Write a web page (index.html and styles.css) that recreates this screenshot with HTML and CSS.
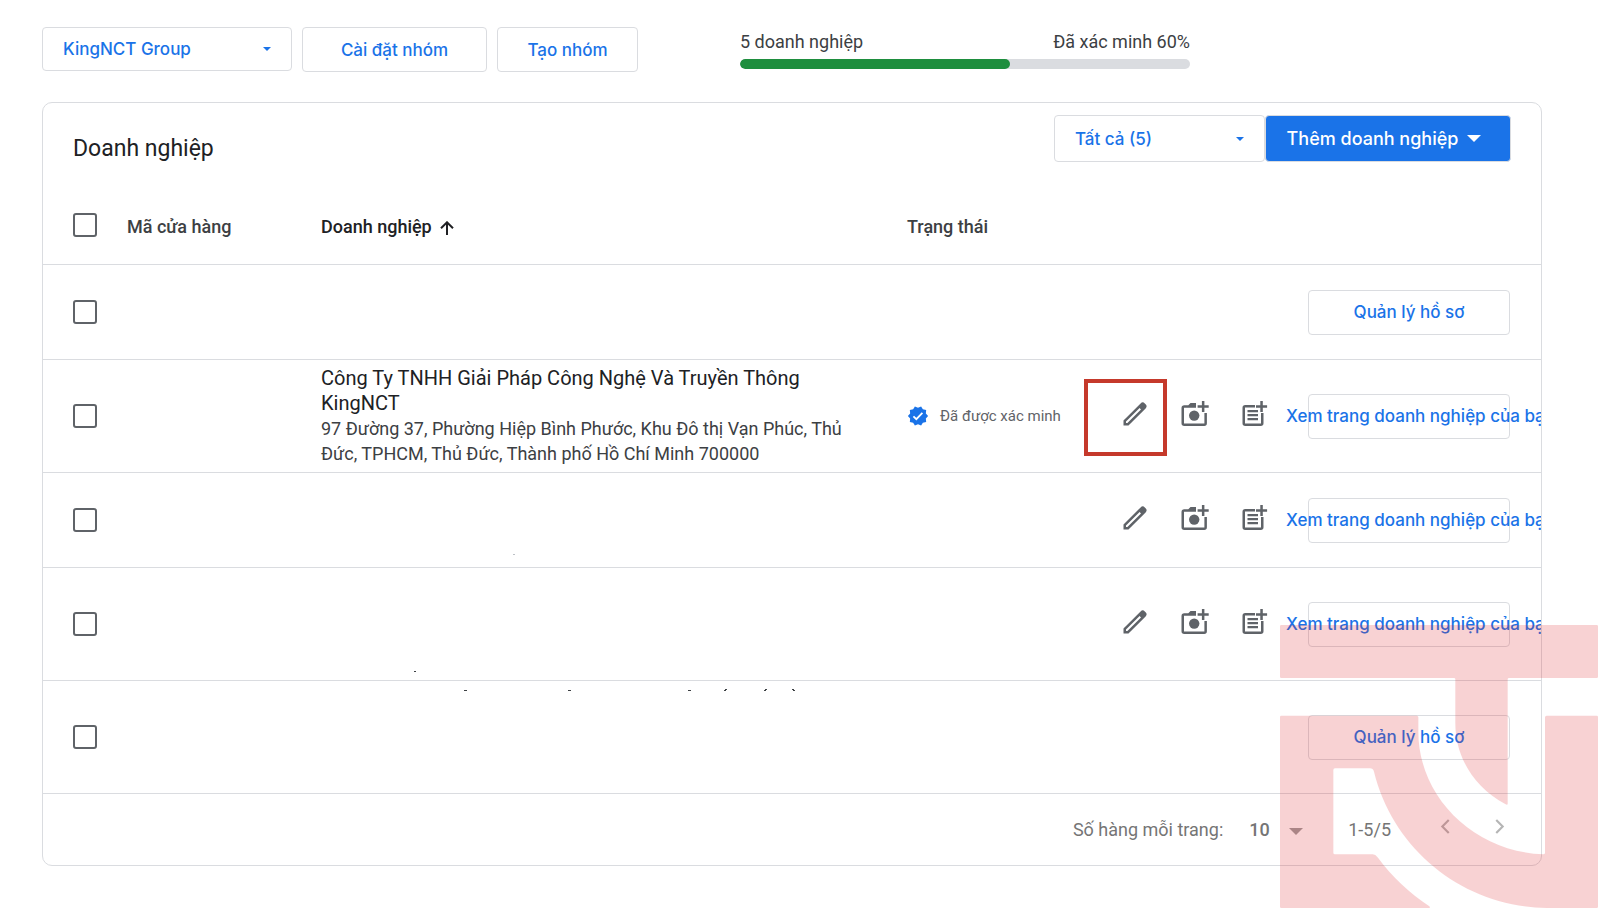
FILE: index.html
```html
<!DOCTYPE html>
<html lang="vi">
<head>
    <meta charset="UTF-8">
    <meta name="viewport" content="width=device-width, initial-scale=1.0">
    <title>Doanh nghiệp</title>
    <link rel="stylesheet" href="styles.css">
</head>
<body>
    <!-- Shared icons -->
    <svg class="sprite" aria-hidden="true">
        <symbol id="icon-edit" viewBox="0 0 24 24">
            <path fill-rule="evenodd" d="M0.5 18.5 17.6 1.4a3 3 0 0 1 4.2 0l0.8 0.8a3 3 0 0 1 0 4.2L5.5 23.5H0.5ZM3 19.6V21h1.4L18 7.4 16.6 6Z"/>
        </symbol>
        <symbol id="icon-photo" viewBox="0 0 28 26">
            <path d="M15 2H9.5L7.3 4.3H3.2A2.7 2.7 0 0 0 .5 7v15.3A2.7 2.7 0 0 0 3.2 25h20a2.7 2.7 0 0 0 2.7-2.7V12h-2.5v10.5H3V6.8h12Z"/>
            <circle cx="13.2" cy="14.6" r="5.2"/>
            <path d="M20.9 0h2.5v4.3h4.3v2.5h-4.3v4.3h-2.5V6.8h-4.3V4.3h4.3Z"/>
        </symbol>
        <symbol id="icon-post" viewBox="0 0 26 26">
            <path d="M13 4H3.2A2.7 2.7 0 0 0 .5 6.7v15.6A2.7 2.7 0 0 0 3.2 25h15.600a2.7 2.7 0 0 0 2.7-2.7V12H19v10.500H3v-16h10Z"/>
            <path d="M5.500 9H16v2.300H5.500ZM5.500 13H16v2.300H5.500ZM5.500 17H16v2.300H5.500Z"/>
            <path d="M18.3 0h2.500v4.300h4.300v2.500h-4.300v4.300h-2.500V6.800H14V4.300h4.300Z"/>
        </symbol>
        <symbol id="icon-arrow" viewBox="0 0 10 5">
            <path d="M0 0h10L5 5Z"/>
        </symbol>
    </svg>

    <header class="toolbar">
        <div class="select-box group-select">
            <select aria-label="Nhóm">
                <option>KingNCT Group</option>
            </select>
            <svg class="small-arrow"><use href="#icon-arrow"/></svg>
        </div>
        <button type="button" class="btn btn-settings">Cài đặt nhóm</button>
        <button type="button" class="btn btn-create">Tạo nhóm</button>
        <div class="progress">
            <div class="progress-text">
                <span>5 doanh nghiệp</span>
                <span>Đã xác minh 60%</span>
            </div>
            <div class="progress-track">
                <div class="progress-fill" style="width: 60%"></div>
            </div>
        </div>
    </header>

    <main class="card">
        <div class="card-head">
            <h1>Doanh nghiệp</h1>
            <div class="select-box filter-select">
                <select aria-label="Lọc">
                    <option>Tất cả (5)</option>
                </select>
                <svg class="small-arrow"><use href="#icon-arrow"/></svg>
            </div>
            <button type="button" class="btn btn-primary">Thêm doanh nghiệp
                <svg class="big-arrow"><use href="#icon-arrow"/></svg>
            </button>
        </div>

        <table>
            <colgroup>
                <col class="col-check">
                <col class="col-code">
                <col>
                <col class="col-status">
                <col class="col-actions">
            </colgroup>
            <thead>
                <tr>
                    <th class="check"><input type="checkbox" aria-label="Chọn tất cả"></th>
                    <th>Mã cửa hàng</th>
                    <th class="sorted">Doanh nghiệp
                        <svg class="sort-icon" viewBox="0 0 14 14"><path d="M7 14V1.5M1 7.3l6-6 6 6"/></svg>
                    </th>
                    <th>Trạng thái</th>
                    <th></th>
                </tr>
            </thead>
            <tbody>
                <tr>
                    <td class="check"><input type="checkbox" aria-label="Chọn hàng 1"></td>
                    <td></td>
                    <td></td>
                    <td></td>
                    <td>
                        <div class="actions">
                            <button type="button" class="btn btn-row">Quản lý hồ sơ</button>
                        </div>
                    </td>
                </tr>
                <tr class="tall">
                    <td class="check"><input type="checkbox" aria-label="Chọn hàng 2"></td>
                    <td></td>
                    <td class="business">
                        <div class="name">Công Ty TNHH Giải Pháp Công Nghệ Và Truyền Thông KingNCT</div>
                        <div class="address">97 Đường 37, Phường Hiệp Bình Phước, Khu Đô thị Vạn Phúc, Thủ Đức, TPHCM, Thủ Đức, Thành phố Hồ Chí Minh 700000</div>
                    </td>
                    <td>
                        <div class="status">
                            <svg viewBox="0 0 24 24"><path d="M23 12l-2.44-2.78.34-3.68-3.61-.82-1.89-3.18L12 3 8.600 1.540 6.710 4.720l-3.610.810.340 3.680L1 12l2.440 2.780-.340 3.690 3.610.820 1.890 3.180L12 21l3.400 1.460 1.890-3.180 3.610-.820-.340-3.680L23 12z"/><path class="tick" d="M7 12.300l3.200 3.200 6.600-6.800"/></svg>
                            <span>Đã được xác minh</span>
                        </div>
                    </td>
                    <td>
                        <div class="actions">
                            <button type="button" class="icon-btn marked" aria-label="Chỉnh sửa"><svg class="edit"><use href="#icon-edit"/></svg></button>
                            <button type="button" class="icon-btn" aria-label="Thêm ảnh"><svg class="photo"><use href="#icon-photo"/></svg></button>
                            <button type="button" class="icon-btn" aria-label="Thêm bài đăng"><svg class="post"><use href="#icon-post"/></svg></button>
                            <button type="button" class="btn btn-row btn-view"><span>Xem trang doanh nghiệp của bạn</span></button>
                        </div>
                    </td>
                </tr>
                <tr>
                    <td class="check"><input type="checkbox" aria-label="Chọn hàng 3"></td>
                    <td></td>
                    <td class="traces"><svg viewBox="0 0 480 94"><path class="faint" d="M192 81h2v1h-2z"/></svg></td>
                    <td></td>
                    <td>
                        <div class="actions">
                            <button type="button" class="icon-btn" aria-label="Chỉnh sửa"><svg class="edit"><use href="#icon-edit"/></svg></button>
                            <button type="button" class="icon-btn" aria-label="Thêm ảnh"><svg class="photo"><use href="#icon-photo"/></svg></button>
                            <button type="button" class="icon-btn" aria-label="Thêm bài đăng"><svg class="post"><use href="#icon-post"/></svg></button>
                            <button type="button" class="btn btn-row btn-view"><span>Xem trang doanh nghiệp của bạn</span></button>
                        </div>
                    </td>
                </tr>
                <tr class="tall">
                    <td class="check"><input type="checkbox" aria-label="Chọn hàng 4"></td>
                    <td></td>
                    <td class="traces"><svg viewBox="0 0 480 112"><path d="M93 103h2v1h-2z"/></svg></td>
                    <td></td>
                    <td>
                        <div class="actions">
                            <button type="button" class="icon-btn" aria-label="Chỉnh sửa"><svg class="edit"><use href="#icon-edit"/></svg></button>
                            <button type="button" class="icon-btn" aria-label="Thêm ảnh"><svg class="photo"><use href="#icon-photo"/></svg></button>
                            <button type="button" class="icon-btn" aria-label="Thêm bài đăng"><svg class="post"><use href="#icon-post"/></svg></button>
                            <button type="button" class="btn btn-row btn-view"><span>Xem trang doanh nghiệp của bạn</span></button>
                        </div>
                    </td>
                </tr>
                <tr class="tall">
                    <td class="check"><input type="checkbox" aria-label="Chọn hàng 5"></td>
                    <td></td>
                    <td class="traces"><svg viewBox="0 0 480 112"><path d="M143 9h3v1h-3zM247 9h3v1h-3zM367 9h3v1h-3zM403 9h2v1h-2zM404 8h2v1h-2zM443 9h2v1h-2zM444 8h2v1h-2zM471 8h2v1h-2zM472 9h2v1h-2z"/></svg></td>
                    <td></td>
                    <td>
                        <div class="actions">
                            <button type="button" class="btn btn-row">Quản lý hồ sơ</button>
                        </div>
                    </td>
                </tr>
            </tbody>
        </table>

        <footer class="pager">
            <label for="rows">Số hàng mỗi trang:</label>
            <div class="select-box rows-select">
                <select id="rows">
                    <option>10</option>
                </select>
                <svg class="big-arrow"><use href="#icon-arrow"/></svg>
            </div>
            <span class="range">1-5/5</span>
            <button type="button" class="page-btn" aria-label="Trang trước"><svg viewBox="0 0 9 14"><path d="M8 1 2 7l6 6"/></svg></button>
            <button type="button" class="page-btn" aria-label="Trang sau"><svg viewBox="0 0 9 14"><path d="m1 1 6 6-6 6"/></svg></button>
        </footer>
    </main>

    <!-- Logo watermark over the bottom corner -->
    <svg class="watermark" viewBox="60 105 954 849" aria-hidden="true">
        <path d="M64 105H1010q4 0 4 4V260q0 4-4 4H747q-4 0-4 4V641q0 5-6 2C640 590 586 500 586 400V268q0-4-4-4H64q-4 0-4-4V109q0-4 4-4Z"/>
        <path d="M64 377H470q5 0 5 5V425C475 620 640 785 850 793q5 0 5-5V382q0-5 5-5H1010q4 0 4 4V950q0 4-4 4H860C610 950 400 780 342 545Q339 535 330 535H225q-5 0-5 5V788q0 5 5 5H338Q346 793 354 803C395 860 450 910 508 949q4 5-2 5H64q-4 0-4-4V381q0-4 4-4Z"/>
    </svg>
</body>
</html>
```
FILE: styles.css
```css
*,
*::after {
    box-sizing: border-box;
}

body {
    margin: 0;
    padding: 27px 57px 41px 42px;
    background-color: #fff;
    color: #3c4043;
    font-family: Roboto, "Noto Sans", sans-serif;
    font-size: 18px;
    line-height: 25px;
}

button,
select {
    font-family: Inter, "Noto Sans", sans-serif;
    font-size: 17px;
    font-weight: 500;
    color: #1a73e8;
}

.sprite {
    display: none;
}

/* Top bar */
.toolbar {
    display: flex;
    align-items: flex-start;
    gap: 10px;
    margin-bottom: 30px;
}

.btn {
    height: 45px;
    padding: 0;
    background-color: #fff;
    border: 1px solid #dadce0;
    border-radius: 4px;
    white-space: nowrap;
    cursor: pointer;
}

.btn-settings {
    width: 185px;
}

.btn-create {
    width: 141px;
}

.select-box {
    position: relative;
}

.select-box select {
    appearance: none;
    width: 100%;
    height: 100%;
    padding: 0 20px;
    background-color: transparent;
    border: 1px solid #dadce0;
    border-radius: 4px;
}

/* Arrow lies over the select */
.select-box svg {
    position: absolute;
    top: 50%;
    right: 21px;
    margin-top: -2px;
    pointer-events: none;
}

.small-arrow {
    width: 8px;
    height: 4px;
    fill: #1a73e8;
}

.big-arrow {
    width: 14px;
    height: 7px;
    fill: #fff;
}

.group-select {
    width: 250px;
    height: 44px;
}

.progress {
    width: 450px;
    margin-left: 92px;
    padding-top: 2px;
}

.progress-text {
    display: flex;
    justify-content: space-between;
    margin-bottom: 5px;
}

.progress-track {
    height: 10px;
    background-color: #dadce0;
    border-radius: 5px;
    overflow: hidden;
}

.progress-fill {
    height: 100%;
    background-color: #1e8e3e;
    border-radius: 5px;
}

/* Card */
.card {
    border: 1px solid #dadce0;
    border-radius: 10px;
    overflow: hidden;
}

.card-head {
    display: flex;
    align-items: flex-start;
    padding: 12px 30px 27px;
}

.card-head h1 {
    flex: 1;
    margin: 20px 0 0;
    color: #202124;
    font-size: 23px;
    font-weight: 400;
    line-height: 27px;
}

.filter-select {
    width: 211px;
    height: 47px;
}

.btn-primary {
    display: flex;
    align-items: center;
    justify-content: center;
    gap: 9px;
    width: 246px;
    height: 47px;
    padding-right: 8px;
    background-color: #1a73e8;
    color: #fff;
    font-size: 18px;
}

/* Table */
table {
    width: 100%;
    table-layout: fixed;
    border-spacing: 0;
}

.col-check {
    width: 84px;
}

.col-code {
    width: 194px;
}

.col-status {
    width: 177px;
}

.col-actions {
    width: 457px;
}

th,
td {
    height: 95px;
    padding: 0;
    border-bottom: 1px solid #dadce0;
    text-align: left;
}

th {
    height: 76px;
    font-weight: 500;
}

.tall td {
    height: 113px;
}

.check {
    padding-left: 30px;
}

th.check {
    padding-bottom: 4px;
}

.check input {
    appearance: none;
    display: block;
    width: 24px;
    height: 24px;
    margin: 0;
    border: 2px solid #5f6368;
    border-radius: 3px;
}

.sorted {
    color: #202124;
}

.sort-icon {
    width: 14px;
    height: 14px;
    margin-left: 4px;
    vertical-align: -2px;
    fill: none;
    stroke: #202124;
    stroke-width: 2;
}

.business {
    padding-right: 60px;
}

.name {
    color: #202124;
    font-size: 20px;
}

.status {
    display: flex;
    align-items: center;
    gap: 11px;
    color: #5f6368;
    font-size: 15px;
    white-space: nowrap;
}

.status svg {
    width: 22px;
    height: 22px;
    fill: #1a73e8;
}

.status .tick {
    fill: none;
    stroke: #fff;
    stroke-width: 2;
}

.traces {
    vertical-align: top;
}

.traces svg {
    display: block;
    width: 480px;
    fill: #3c4043;
}

.traces .faint {
    fill: #bdc1c6;
}

.actions {
    display: flex;
    align-items: center;
    gap: 20px;
    padding: 0 31px;
}

.icon-btn {
    position: relative;
    display: flex;
    align-items: center;
    justify-content: center;
    width: 40px;
    height: 40px;
    padding: 0 0 4px;
    background: none;
    border: 0;
    cursor: pointer;
}

.icon-btn svg {
    fill: #5f6368;
}

.edit {
    width: 24px;
    height: 24px;
}

.photo {
    width: 28px;
    height: 26px;
}

.post {
    width: 26px;
    height: 26px;
}

/* Red frame around the edit button */
.marked::after {
    content: "";
    position: absolute;
    top: -17px;
    left: -31px;
    width: 83px;
    height: 77px;
    border: 4px solid #c5392b;
}

.btn-row {
    width: 202px;
    margin-left: auto;
}

.btn-view {
    text-align: left;
}

.btn-view span {
    margin-left: -23px;
}

/* Pager */
.pager {
    display: flex;
    align-items: center;
    justify-content: flex-end;
    height: 71px;
    padding-right: 31px;
    color: #757575;
}

.rows-select {
    width: 80px;
    height: 40px;
    margin-right: 45px;
}

.rows-select select {
    padding: 0 0 0 26px;
    border: 0;
    color: #757575;
    font-family: Roboto, sans-serif;
    font-size: 18px;
}

.rows-select .big-arrow {
    right: 0;
    fill: #9e9e9e;
}

.page-btn {
    width: 20px;
    height: 40px;
    margin-left: 35px;
    padding: 0 0 4px;
    background: none;
    border: 0;
}

.range + .page-btn {
    margin-left: 44px;
}

.page-btn svg {
    width: 10px;
    height: 15px;
    fill: none;
    stroke: #b5b5b5;
    stroke-width: 2;
}

.watermark {
    position: absolute;
    top: 625px;
    right: 1px;
    width: 318px;
    height: 283px;
    fill: #e12328;
    opacity: 0.2;
    pointer-events: none;
}
```
